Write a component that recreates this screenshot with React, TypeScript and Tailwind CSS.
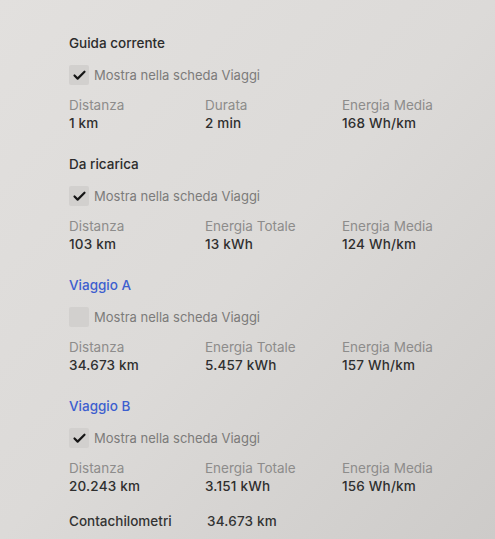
import { Check } from "lucide-react";

type Stat = { label: string; value: string };

type Trip = {
  title: string;
  accent?: boolean;
  shown: boolean;
  stats: Stat[];
};

const trips: Trip[] = [
  {
    title: "Guida corrente",
    shown: true,
    stats: [
      { label: "Distanza", value: "1 km" },
      { label: "Durata", value: "2 min" },
      { label: "Energia Media", value: "168 Wh/km" },
    ],
  },
  {
    title: "Da ricarica",
    shown: true,
    stats: [
      { label: "Distanza", value: "103 km" },
      { label: "Energia Totale", value: "13 kWh" },
      { label: "Energia Media", value: "124 Wh/km" },
    ],
  },
  {
    title: "Viaggio A",
    accent: true,
    shown: false,
    stats: [
      { label: "Distanza", value: "34.673 km" },
      { label: "Energia Totale", value: "5.457 kWh" },
      { label: "Energia Media", value: "157 Wh/km" },
    ],
  },
  {
    title: "Viaggio B",
    accent: true,
    shown: true,
    stats: [
      { label: "Distanza", value: "20.243 km" },
      { label: "Energia Totale", value: "3.151 kWh" },
      { label: "Energia Media", value: "156 Wh/km" },
    ],
  },
];

function ShowToggle({ checked }: { checked: boolean }) {
  return (
    <div className="flex h-[20px] items-center gap-[5px]">
      <div className="flex h-[20px] w-[20px] items-center justify-center rounded-[2px] bg-[#d2d0ce]">
        {checked && <Check className="h-[15px] w-[15px] text-[#151515]" strokeWidth={3.5} />}
      </div>
      <span className="text-[13px] leading-[20px] text-[#7c7b7a]">Mostra nella scheda Viaggi</span>
    </div>
  );
}

function TripSection({ trip }: { trip: Trip }) {
  return (
    <section className="flex flex-col pb-[22px]">
      <h2
        className={`h-[20px] text-[13.5px] font-medium leading-[20px] ${
          trip.accent ? "text-[#3d5fcf]" : "text-[#2c2c2c]"
        }`}
      >
        {trip.title}
      </h2>
      <div className="mt-[12px]">
        <ShowToggle checked={trip.shown} />
      </div>
      <div className="mt-[11px] grid grid-cols-[136px_137px_1fr]">
        {trip.stats.map((s) => (
          <div key={s.label} className="flex flex-col">
            <span className="text-[13.5px] leading-[18px] text-[#8d8c8b]">{s.label}</span>
            <span className="text-[13.5px] font-medium leading-[18px] tracking-[0.2px] text-[#2f2f2f]">
              {s.value}
            </span>
          </div>
        ))}
      </div>
    </section>
  );
}

export default function App() {
  return (
    <div
      className="h-[539px] w-full overflow-hidden bg-gradient-to-br from-[#e2e0de] via-[#dcdad8] to-[#cdcbc9] pl-[69px] pt-[33px]"
      style={{ fontFamily: "Inter, 'Noto Sans', sans-serif" }}
    >
      {trips.map((t) => (
        <TripSection key={t.title} trip={t} />
      ))}
      <div className="-mt-[5px] grid grid-cols-[138px_1fr]">
        <span className="text-[13.5px] font-medium leading-[18px] text-[#333]">Contachilometri</span>
        <span className="text-[13.5px] font-medium leading-[18px] tracking-[0.2px] text-[#333]">34.673 km</span>
      </div>
    </div>
  );
}
